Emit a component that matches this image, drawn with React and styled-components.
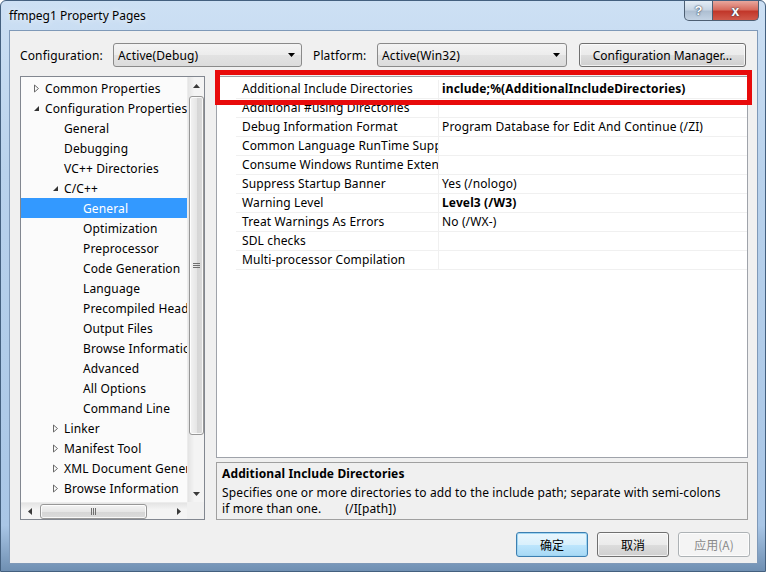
import React from 'react'
import styled, { createGlobalStyle } from 'styled-components'

const GlobalStyle = createGlobalStyle`
  html, body { margin: 0; padding: 0; background: #fff; }
  body {
    font-family: "Segoe UI", "Noto Sans", sans-serif;
    font-size: 12px;
    letter-spacing: 0.13px;
    color: #000;
  }
  * { box-sizing: border-box; }
`

const Window = styled.div`
  width: 766px;
  height: 572px;
  display: flex;
  flex-direction: column;
  background: linear-gradient(180deg, #cde0f4 0%, #b9d2ec 30%, #a9c6e6 92%, #6f8fb2 100%);
  border: 1px solid #44607f;
  border-radius: 6px 6px 0 0;
  padding: 0 7px 7px 8px;
  overflow: hidden;
`

const TitleBar = styled.div`
  height: 29px;
  display: flex;
  align-items: flex-start;
`

const Title = styled.div`
  padding-top: 6px;
  font-size: 12px;
  letter-spacing: 0;
  color: #000;
  text-shadow: 0 0 6px rgba(255, 255, 255, 0.9);
`

const CaptionButtons = styled.div`
  margin-left: auto;
  margin-right: -1px;
  display: flex;
`

const CaptionButton = styled.div`
  height: 20px;
  width: ${p => (p.$close ? '46px' : '29px')};
  border: 1px solid #4d5f73;
  border-top: none;
  border-left: ${p => (p.$close ? 'none' : '1px solid #4d5f73')};
  border-radius: ${p => (p.$close ? '0 0 5px 0' : '0 0 0 5px')};
  background: ${p =>
    p.$close
      ? 'linear-gradient(180deg, #e8a79d 0%, #d86c5e 45%, #c2372a 55%, #d0594a 100%)'
      : 'linear-gradient(180deg, #e4edf6 0%, #c8d6e5 45%, #aebfd2 55%, #c3d3e4 100%)'};
  display: flex;
  align-items: center;
  justify-content: center;
  color: #fff;
  font-family: "Liberation Sans", sans-serif;
  font-weight: bold;
  font-size: ${p => (p.$close ? '14px' : '13px')};
  text-shadow: 0 0 2px #34455a, 0 0 1px #34455a;
`

const Client = styled.div`
  flex: 1;
  display: flex;
  flex-direction: column;
  background: #f0f0f0;
  border: 1px solid #7f99b8;
  padding: 12px 8px 6px 10px;
`

const TopRow = styled.div`
  height: 24px;
  display: flex;
  align-items: center;
`

const Label = styled.div`
  width: ${p => p.$w}px;
  margin-left: ${p => p.$ml || 0}px;
`

const Combo = styled.div`
  width: ${p => p.$w}px;
  height: 24px;
  border: 1px solid #8a8a8a;
  border-radius: 3px;
  background: linear-gradient(180deg, #f4f4f4 0%, #ececec 50%, #e2e2e2 51%, #dcdcdc 100%);
  display: flex;
  align-items: center;
  padding: 0 6px 0 4px;
  span { flex: 1; }
`

const Button = styled.div`
  width: ${p => p.$w || 72}px;
  height: ${p => p.$h || 25}px;
  margin-left: ${p => p.$ml || 0}px;
  border: 1px solid ${p => (p.$default ? '#3c7fb1' : p.$disabled ? '#adb2b5' : '#707070')};
  border-radius: 3px;
  background: ${p =>
    p.$default
      ? 'linear-gradient(180deg, #eaf6fd 0%, #d9f0fc 50%, #bee6fd 51%, #a7d9f5 100%)'
      : p.$disabled
      ? '#f4f4f4'
      : 'linear-gradient(180deg, #f2f2f2 0%, #ebebeb 50%, #dddddd 51%, #cfcfcf 100%)'};
  box-shadow: ${p => (p.$default ? 'inset 0 0 0 1px #9fd5f2' : 'inset 0 0 0 1px rgba(255,255,255,0.7)')};
  color: ${p => (p.$disabled ? '#8a8a8a' : '#000')};
  display: flex;
  align-items: center;
  justify-content: center;
  letter-spacing: 0;
  font-family: ${p => (p.$cjk ? '"Noto Sans CJK SC", sans-serif' : 'inherit')};
`

const Main = styled.div`
  margin-top: 9px;
  height: 444px;
  display: flex;
  gap: 11px;
`

const TreePanel = styled.div`
  width: 185px;
  border: 1px solid #828790;
  background: #fbfbfb;
  display: grid;
  grid-template-columns: 1fr 17px;
  grid-template-rows: 1fr 17px;
`

const TreeList = styled.div`
  padding-top: 1px;
  overflow: hidden;
`

const TreeRow = styled.div`
  height: 20px;
  display: flex;
  align-items: center;
  white-space: nowrap;
  padding-left: ${p => 12 + p.$level * 19}px;
  background: ${p => (p.$selected ? '#3399ff' : 'transparent')};
  color: ${p => (p.$selected ? '#fff' : '#000')};
`

const Expander = styled.div`
  width: 12px;
  height: 20px;
  flex: none;
  display: flex;
  align-items: center;
`

const VScroll = styled.div`
  display: flex;
  flex-direction: column;
  background: linear-gradient(90deg, #e4e4e4, #f4f4f4 40%, #f4f4f4);
  border-left: 1px solid #ececec;
`

const HScroll = styled.div`
  display: flex;
  align-items: center;
  background: linear-gradient(180deg, #e4e4e4, #f4f4f4 40%, #f4f4f4);
  border-top: 1px solid #ececec;
`

const Corner = styled.div`
  background: #f0f0f0;
`

const Spacer = styled.div`
  flex: 1;
`

const ArrowBox = styled.div`
  width: 17px;
  height: 17px;
  flex: none;
  display: flex;
  align-items: center;
  justify-content: center;
`

const Thumb = styled.div`
  border: 1px solid #979797;
  border-radius: 3px;
  background: ${p =>
    p.$h
      ? 'linear-gradient(180deg, #f3f3f3 0%, #e6e6e6 50%, #d6d6d6 51%, #dadada 100%)'
      : 'linear-gradient(90deg, #f3f3f3 0%, #e6e6e6 50%, #d6d6d6 51%, #dadada 100%)'};
  box-shadow: inset 0 0 0 1px rgba(255, 255, 255, 0.8);
  display: flex;
  align-items: center;
  justify-content: center;
  ${p => (p.$h ? 'height: 15px; width: 107px; margin-left: 2px;' : 'width: 15px; height: 339px; margin: 2px 0 0 1px;')}
`

const Grip = styled.div`
  display: flex;
  flex-direction: ${p => (p.$h ? 'row' : 'column')};
  gap: 1px;
  i {
    display: block;
    background: #6f6f6f;
    ${p => (p.$h ? 'width: 1px; height: 7px;' : 'height: 1px; width: 7px;')}
  }
`

const RightCol = styled.div`
  width: 532px;
  display: flex;
  flex-direction: column;
  gap: 4px;
`

const GridPanel = styled.div`
  position: relative;
  height: 382px;
  border: 1px solid #9fa3aa;
  background: #fff;
  padding-top: 3px;
`

const GridRow = styled.div`
  height: 19px;
  display: grid;
  grid-template-columns: 19px 202px 1fr;
`

const Cell = styled.div`
  border-bottom: 1px solid #f0f0f0;
  border-left: ${p => (p.$value ? '1px solid #f0f0f0' : 'none')};
  padding-left: ${p => (p.$value ? 3 : 6)}px;
  line-height: 18px;
  white-space: nowrap;
  overflow: hidden;
  font-weight: ${p => (p.$bold ? 'bold' : 'normal')};
`

const Gutter = styled.div``

const Highlight = styled.div`
  position: absolute;
  left: -2px;
  top: -7px;
  width: 537px;
  height: 35px;
  border: 5px solid #e80b0b;
  pointer-events: none;
`

const Description = styled.div`
  flex: 1;
  border: 1px solid #a0a0a0;
  background: #f0f0f0;
  padding: 3px 5px 2px 5px;
  line-height: 16px;
  strong { display: block; margin-bottom: 3px; }
`

const Switch = styled.span`
  margin-left: 24px;
`

const ButtonRow = styled.div`
  margin-top: 12px;
  display: flex;
  justify-content: flex-end;
  gap: 9px;
  margin-right: -1px;
`

const DropArrow = () => (
  <svg width="7" height="4" viewBox="0 0 7 4">
    <path d="M0 0h7L3.5 4z" fill="#000" />
  </svg>
)

const TreeArrow = ({ open }) =>
  open ? (
    <svg width="7" height="7" viewBox="0 0 7 7">
      <path d="M6 1v5H1z" fill="#333" />
    </svg>
  ) : (
    <svg width="7" height="9" viewBox="0 0 7 9">
      <path d="M1.5 1v7l4-3.5z" fill="none" stroke="#6a6a6a" strokeWidth="1" />
    </svg>
  )

const Tri = ({ dir }) => {
  const d = {
    up: 'M0 4L3.5 0 7 4z',
    down: 'M0 0h7L3.5 4z',
    left: 'M4 0v7L0 3.5z',
    right: 'M0 0v7l4-3.5z',
  }[dir]
  const vert = dir === 'up' || dir === 'down'
  return (
    <svg width={vert ? 7 : 4} height={vert ? 4 : 7} viewBox={vert ? '0 0 7 4' : '0 0 4 7'}>
      <path d={d} fill="#3a3a3a" />
    </svg>
  )
}

const tree = [
  { label: 'Common Properties', level: 0, arrow: 'closed' },
  { label: 'Configuration Properties', level: 0, arrow: 'open' },
  { label: 'General', level: 1 },
  { label: 'Debugging', level: 1 },
  { label: 'VC++ Directories', level: 1 },
  { label: 'C/C++', level: 1, arrow: 'open' },
  { label: 'General', level: 2, selected: true },
  { label: 'Optimization', level: 2 },
  { label: 'Preprocessor', level: 2 },
  { label: 'Code Generation', level: 2 },
  { label: 'Language', level: 2 },
  { label: 'Precompiled Headers', level: 2 },
  { label: 'Output Files', level: 2 },
  { label: 'Browse Information', level: 2 },
  { label: 'Advanced', level: 2 },
  { label: 'All Options', level: 2 },
  { label: 'Command Line', level: 2 },
  { label: 'Linker', level: 1, arrow: 'closed' },
  { label: 'Manifest Tool', level: 1, arrow: 'closed' },
  { label: 'XML Document Generator', level: 1, arrow: 'closed' },
  { label: 'Browse Information', level: 1, arrow: 'closed' },
]

const props = [
  ['Additional Include Directories', 'include;%(AdditionalIncludeDirectories)', true],
  ['Additional #using Directories', ''],
  ['Debug Information Format', 'Program Database for Edit And Continue (/ZI)'],
  ['Common Language RunTime Support', ''],
  ['Consume Windows Runtime Extension', ''],
  ['Suppress Startup Banner', 'Yes (/nologo)'],
  ['Warning Level', 'Level3 (/W3)', true],
  ['Treat Warnings As Errors', 'No (/WX-)'],
  ['SDL checks', ''],
  ['Multi-processor Compilation', ''],
]

export default function App() {
  return (
    <>
      <GlobalStyle />
      <Window>
        <TitleBar>
          <Title>ffmpeg1 Property Pages</Title>
          <CaptionButtons>
            <CaptionButton>?</CaptionButton>
            <CaptionButton $close>x</CaptionButton>
          </CaptionButtons>
        </TitleBar>
        <Client>
          <TopRow>
            <Label $w={93}>Configuration:</Label>
            <Combo $w={189}>
              <span>Active(Debug)</span>
              <DropArrow />
            </Combo>
            <Label $w={64} $ml={11}>Platform:</Label>
            <Combo $w={190}>
              <span>Active(Win32)</span>
              <DropArrow />
            </Combo>
            <Button $w={167} $h={24} $ml={12}>Configuration Manager...</Button>
          </TopRow>
          <Main>
            <TreePanel>
              <TreeList>
                {tree.map((t, i) => (
                  <TreeRow key={i} $level={t.level} $selected={t.selected}>
                    <Expander>{t.arrow && <TreeArrow open={t.arrow === 'open'} />}</Expander>
                    <span>{t.label}</span>
                  </TreeRow>
                ))}
              </TreeList>
              <VScroll>
                <ArrowBox><Tri dir="up" /></ArrowBox>
                <Thumb>
                  <Grip><i /><i /><i /></Grip>
                </Thumb>
                <Spacer />
                <ArrowBox><Tri dir="down" /></ArrowBox>
              </VScroll>
              <HScroll>
                <ArrowBox><Tri dir="left" /></ArrowBox>
                <Thumb $h>
                  <Grip $h><i /><i /><i /></Grip>
                </Thumb>
                <Spacer />
                <ArrowBox><Tri dir="right" /></ArrowBox>
              </HScroll>
              <Corner />
            </TreePanel>
            <RightCol>
              <GridPanel>
                {props.map(([name, value, bold], i) => (
                  <GridRow key={i}>
                    <Gutter />
                    <Cell>{name}</Cell>
                    <Cell $value $bold={bold}>{value}</Cell>
                  </GridRow>
                ))}
                <Highlight />
              </GridPanel>
              <Description>
                <strong>Additional Include Directories</strong>
                Specifies one or more directories to add to the include path; separate with semi-colons
                <br />
                if more than one.<Switch>(/I[path])</Switch>
              </Description>
            </RightCol>
          </Main>
          <ButtonRow>
            <Button $default $cjk>确定</Button>
            <Button $cjk>取消</Button>
            <Button $disabled $cjk>应用(A)</Button>
          </ButtonRow>
        </Client>
      </Window>
    </>
  )
}
